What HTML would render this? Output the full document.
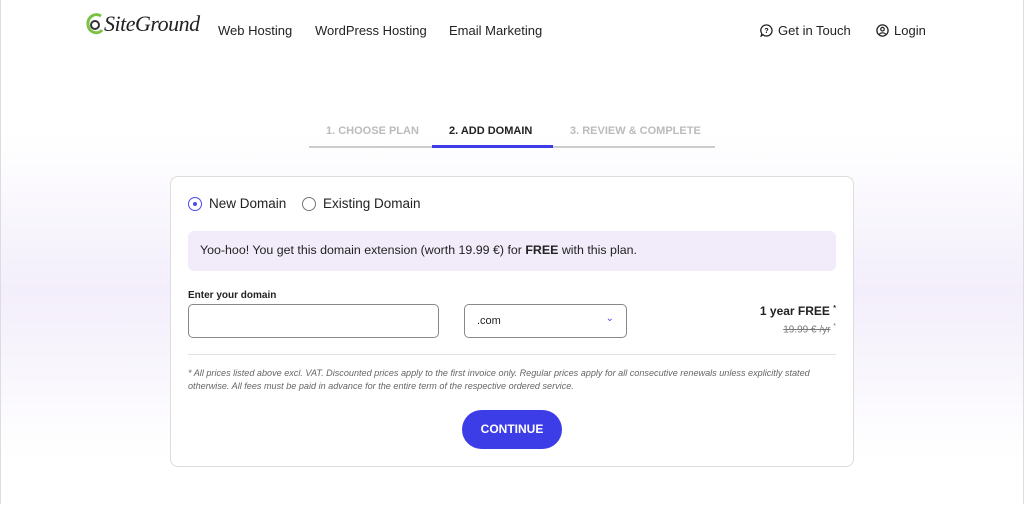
<!DOCTYPE html>
<html><head><style>
*{margin:0;padding:0;box-sizing:border-box}
body{width:1024px;height:512px;overflow:hidden;font-family:"Liberation Sans",sans-serif;color:#222;position:relative;background:linear-gradient(#fff 0,#fff 135px,#f3eefb 290px,#fff 460px,#fff 512px)}
.edge{position:absolute;top:0;bottom:8px;width:1px;background:#ddd}
.abs{position:absolute;white-space:nowrap}
.nav{font-size:13px;color:#222;top:23px}
.step{top:125px;font-size:11px;font-weight:bold;color:#bbb}
.card{position:absolute;left:170px;top:176px;width:684px;height:291px;background:#fff;border:1px solid #ddd;border-radius:8px}
.radio{position:absolute;width:14px;height:14px;border-radius:50%;border:1.5px solid #777}
</style></head><body>
<div class="edge" style="left:0"></div><div class="edge" style="right:0"></div>
<svg class="abs" style="left:85px;top:13px" width="22" height="26" viewBox="0 0 22 26"><path d="M16 3C10 -1 2 4 3 12c1 8 10 10 14 5" fill="none" stroke="#7bc142" stroke-width="3"/><circle cx="10" cy="12" r="4" fill="none" stroke="#333" stroke-width="2"/></svg>
<div class="abs" style="left:104px;top:11px;font-size:22px;font-family:'Liberation Serif',serif;font-style:italic;color:#222;letter-spacing:-0.5px">SiteGround</div>
<div class="abs nav" style="left:218px">Web Hosting</div>
<div class="abs nav" style="left:315px">WordPress Hosting</div>
<div class="abs nav" style="left:449px">Email Marketing</div>
<svg class="abs" style="left:760px;top:24px" width="13" height="13" viewBox="0 0 13 13"><path d="M6.5 1a5.5 5.5 0 1 1-3.5 9.7L1.2 12 1.8 9.6A5.5 5.5 0 0 1 6.5 1z" fill="none" stroke="#222" stroke-width="1.3"/><text x="6.5" y="9.2" font-size="7" font-weight="bold" text-anchor="middle" font-family="Liberation Sans">?</text></svg>
<div class="abs nav" style="left:778px">Get in Touch</div>
<svg class="abs" style="left:876px;top:24px" width="13" height="13" viewBox="0 0 13 13"><circle cx="6.5" cy="6.5" r="5.6" fill="none" stroke="#222" stroke-width="1.3"/><circle cx="6.5" cy="5.2" r="1.8" fill="none" stroke="#222" stroke-width="1.2"/><path d="M3.3 10.3c1.5-2 5-2 6.4 0" fill="none" stroke="#222" stroke-width="1.2"/></svg>
<div class="abs nav" style="left:894px">Login</div>
<div class="abs step" style="left:326px">1. CHOOSE PLAN</div>
<div class="abs step" style="left:449px;color:#222">2. ADD DOMAIN</div>
<div class="abs step" style="left:570px">3. REVIEW &amp; COMPLETE</div>
<div class="abs" style="left:309px;top:146px;width:406px;height:2px;background:#ccc"></div>
<div class="abs" style="left:432px;top:145px;width:121px;height:3px;background:#3d3de8"></div>
<div class="card">
 <div class="radio" style="left:17px;top:20px;border-color:#4a4af0"><div style="width:4px;height:4px;border-radius:50%;background:#4a4af0;margin:3.5px"></div></div>
 <div class="abs" style="left:38px;top:19px;font-size:13.5px">New Domain</div>
 <div class="radio" style="left:131px;top:20px"></div>
 <div class="abs" style="left:152px;top:19px;font-size:13.5px">Existing Domain</div>
 <div class="abs" style="left:17px;top:54px;width:648px;height:40px;background:#f2ecfa;border-radius:6px;font-size:12.4px;padding:12px 12px">Yoo-hoo! You get this domain extension (worth 19.99 €) for <b>FREE</b> with this plan.</div>
 <div class="abs" style="left:17px;top:113px;font-size:10px;font-weight:bold">Enter your domain</div>
 <div class="abs" style="left:17px;top:127px;width:251px;height:34px;border:1px solid #888;border-radius:5px"></div>
 <div class="abs" style="left:293px;top:127px;width:163px;height:34px;border:1px solid #888;border-radius:5px;font-size:11px;padding:10px 12px">.com<span style="position:absolute;right:12px;top:8px;color:#4a4af0;font-size:10px">&#8964;</span></div>
 <div class="abs" style="right:17px;top:127px;font-size:12px;font-weight:bold">1 year FREE <sup style="font-size:7px">*</sup></div>
 <div class="abs" style="right:17px;top:146px;font-size:10px;color:#777"><s>19.99 € /yr</s> <sup style="font-size:7px">*</sup></div>
 <div class="abs" style="left:17px;top:177px;width:648px;height:1px;background:#e2e2e2"></div>
 <div class="abs" style="left:17px;top:190px;font-size:9.1px;font-style:italic;color:#666;line-height:13px">* All prices listed above excl. VAT. Discounted prices apply to the first invoice only. Regular prices apply for all consecutive renewals unless explicitly stated<br>otherwise. All fees must be paid in advance for the entire term of the respective ordered service.</div>
 <div class="abs" style="left:291px;top:233px;width:100px;height:39px;border-radius:20px;background:#3d3de8;color:#fff;font-size:12px;font-weight:bold;text-align:center;line-height:39px">CONTINUE</div>
</div>
</body></html>
